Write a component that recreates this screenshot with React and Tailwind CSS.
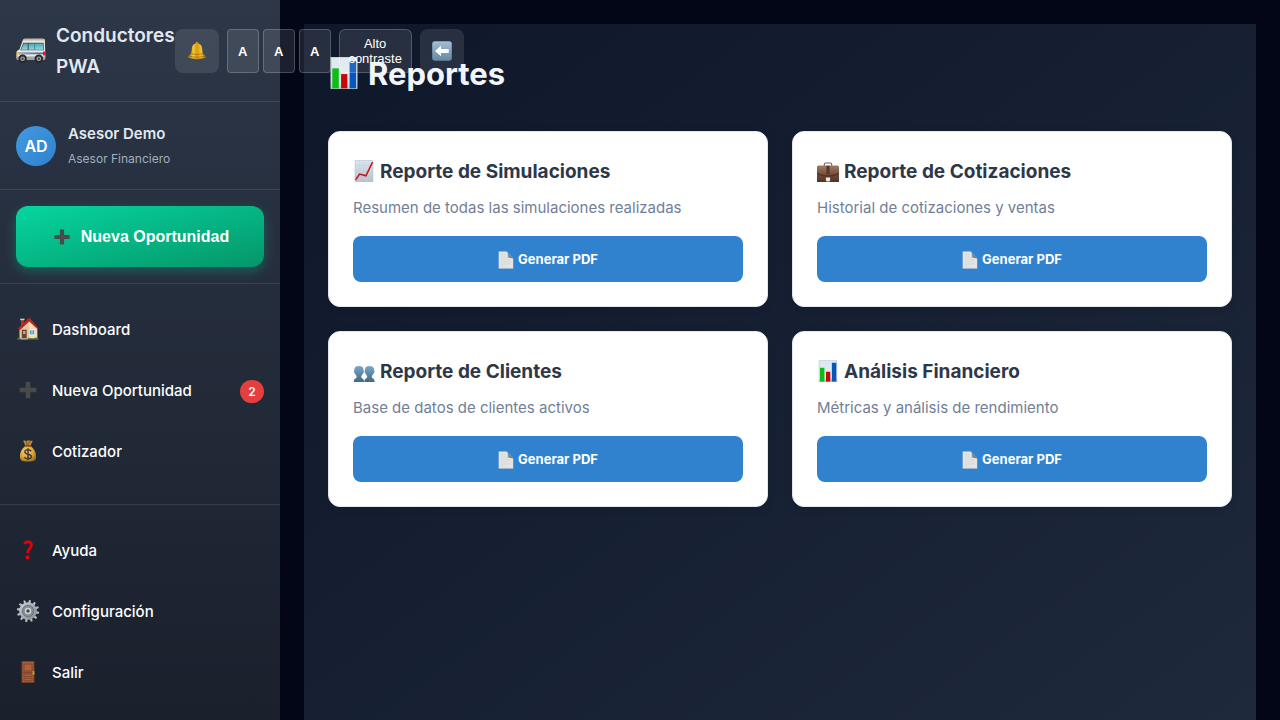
import React, { useId } from 'react';

function Van({ className }) {
  const id = useId();
  return (
    <svg viewBox="0 0 30 26" className={className} aria-hidden="true">
      <defs>
        <linearGradient id={id} x1="0" y1="0" x2="0" y2="1">
          <stop offset="0" stopColor="#4aa5b5" />
          <stop offset="1" stopColor="#8adbe2" />
        </linearGradient>
      </defs>
      <path d="M7 1.8C7.500 1 8.400.7 9.500.7H27c1.300 0 1.900.7 1.900 1.900L29.300 18c0 1.800-.6 3-2 3H2.500C1.200 21 .4 20.200.4 18.800l.2-4.500c0-1 .5-1.700 1.500-2.100l1.300-.7z" fill="#ebe8dc" />
      <path d="M7 1.800C7.500 1 8.400.7 9.500.7H27c1.300 0 1.900.7 1.900 1.900H6.600z" fill="#bcb9ad" />
      <path d="M7.300 4.800h20.300l.5 7.400H4.200z" fill="#3f4a50" />
      <path d="M7.800 5.400h3.800v6.300H5z" fill={`url(#${id})`} />
      <path d="M12.600 5.400h14.500l.4 6.300H12.600z" fill={`url(#${id})`} />
      <path d="M18.700 5.400v6.300" stroke="#287b88" strokeWidth=".7" />
      <path d="M1 14.500h28.200v2.100H3.500z" fill="#566cae" />
      <path d="M1 15.600l25 1.200h3" stroke="#dedff0" strokeWidth=".8" fill="none" />
      <path d="M.8 14.100h1.900l-.4 3.500H.6z" fill="#ffc31d" />
      <path d="M27.100 13.500h2.200v4h-2.200z" fill="#e31523" />
      <path d="M.4 18.600h29v2c0 .8-.5 1.300-1.300 1.300H1.800C.8 21.900.3 21.300.4 20.300z" fill="#a4a39c" />
      {[6.6, 22.8].map((x) => (
        <g key={x}>
          <circle cx={x} cy="20.700" r="4.200" fill="#252729" />
          <circle cx={x} cy="20.700" r="2.300" fill="#a9adaf" />
          <circle cx={x} cy="20.700" r="1.200" fill="#45484a" />
        </g>
      ))}
    </svg>
  );
}

function Bell({ className }) {
  const id = useId();
  return (
    <svg viewBox="0 0 20 20" className={className} aria-hidden="true">
      <defs>
        <linearGradient id={id}>
          <stop offset="0" stopColor="#8c5a04" />
          <stop offset=".3" stopColor="#f5cb34" />
          <stop offset=".5" stopColor="#d99a10" />
          <stop offset=".72" stopColor="#f2c52f" />
          <stop offset="1" stopColor="#7a4b04" />
        </linearGradient>
      </defs>
      <circle cx="10" cy="2.300" r="1.500" fill="#cf970f" />
      <ellipse cx="10" cy="17.300" rx="2.200" ry="1.700" fill="#8c5c09" />
      <path d="M10 2.400c3.500 0 5 2.100 5.200 5.400.2 4.100 1.100 6 3.700 7.300.9.500.7 1.300-.2 1.600-4.700 1.500-12.700 1.500-17.400 0-.9-.3-1-1.100-.2-1.600 2.600-1.300 3.500-3.200 3.700-7.300C5 4.500 6.500 2.400 10 2.400z" fill={`url(#${id})`} />
      <path d="M4.100 12.500c3.100 1.200 8.700 1.200 11.800 0M2.300 15.200c4.300 1.300 11.100 1.300 15.400 0" stroke="#9b6708" strokeWidth=".7" fill="none" />
    </svg>
  );
}

function Back({ className }) {
  const id = useId();
  return (
    <svg viewBox="0 0 20 20" className={className} aria-hidden="true">
      <defs>
        <linearGradient id={id} x1="0" y1="0" x2="0" y2="1">
          <stop offset="0" stopColor="#a3bfd4" />
          <stop offset="1" stopColor="#6488a4" />
        </linearGradient>
      </defs>
      <rect x=".2" y=".2" width="19.600" height="19.600" rx="2.800" fill={`url(#${id})`} />
      <path d="M3 10l6-5.300v3.200h7.700v4.200H9v3.200z" fill="#fff" />
    </svg>
  );
}

function Plus({ className }) {
  return (
    <svg viewBox="0 0 24 24" className={className} aria-hidden="true">
      <path d="M9.700 3.800h4.600v5.900h6v4.600h-6v5.900H9.700v-5.900h-6V9.700h6z" fill="#4a4a4a" />
    </svg>
  );
}

function House({ className }) {
  return (
    <svg viewBox="0 0 24 24" className={className} aria-hidden="true">
      <path d="M5 2.500h2.800V8H5z" fill="#a33b2b" />
      <path d="M4.200 1.700h4.300v1.500H4.200z" fill="#d9cfc0" />
      <path d="M3.500 10.500L13.200 2l8 8.700v11.100H3.500z" fill="#e3c79f" />
      <path d="M13.200 3.500l8 7.700v10.600h-8z" fill="#f2dcb8" />
      <path d="M1.800 11.800L12.300 1.200h1.900l7.900 9.800-.8 1-8-7.600-9.600 8.800z" fill="#b5281f" />
      <path d="M5.800 12.700h4.900v9.100H5.800z" fill="#72412d" />
      <path d="M7 14h2.500v3H7z" fill="#82b7cf" />
      <path d="M13 12.500h6v5.800h-6z" fill="#fff6df" />
      <path d="M13.700 13.200h4.600v4.300h-4.600z" fill="#5d9fca" />
      <path d="M16 13v4.700" stroke="#fff1d6" strokeWidth=".6" />
      <path d="M1 22.600c0-1.500 1-2.200 2.500-1.800v1.300h8.800v-1.300c2 .3 3.800.8 6.200.2 2.200-1 3.700-.4 4.500 1.600z" fill="#5f7d3a" />
      <path d="M4.500 21h7v1.500h-7z" fill="#aaa491" />
    </svg>
  );
}

function MoneyBag({ className }) {
  const id = useId();
  return (
    <svg viewBox="0 0 24 24" className={className} aria-hidden="true">
      <defs>
        <radialGradient id={id} cx=".4" cy=".35" r=".7">
          <stop offset="0" stopColor="#f8d371" />
          <stop offset=".6" stopColor="#d9a63c" />
          <stop offset="1" stopColor="#9d701f" />
        </radialGradient>
      </defs>
      <path d="M7.200 1.700c1.700-.8 2.500.5 4 .1 1.400-.6 2.100-.9 3.100 0 .8.500 1.600-.5 2.500.3l-2.900 5.200H9.700z" fill="#c28b36" />
      <path d="M10 2l1.500 4.300L14 2" stroke="#7f541b" fill="none" />
      <path d="M9.300 7h5.300c3.700 3 5.800 6.600 5.400 11.500-.2 3-2.100 4-8 4s-7.800-1-8-4C3.600 13.600 5.600 10 9.300 7z" fill={`url(#${id})`} />
      <rect x="8.500" y="5.900" width="7" height="1.900" rx=".8" fill="#805421" />
      <path d="M15.200 12.200c-.8-1-1.900-1.400-3.200-1.400-1.800 0-3.100.8-3.100 2.200 0 3.100 6.500 1.500 6.500 4.500 0 1.400-1.400 2.200-3.400 2.200-1.600 0-2.900-.5-3.700-1.500M12 9.200v12" fill="none" stroke="#413b31" strokeWidth="1.500" />
    </svg>
  );
}

function Question({ className }) {
  return (
    <svg viewBox="0 0 24 24" className={className} aria-hidden="true">
      <path d="M8.600 6.100c1-3.300 6.800-3.200 6.800.6 0 4-3.600 4.200-3.800 8.300" fill="none" stroke="#e60008" strokeWidth="2.700" />
      <circle cx="11.500" cy="19.200" r="2" fill="#e60008" />
    </svg>
  );
}

function Gear({ className }) {
  const id = useId();
  return (
    <svg viewBox="0 0 24 24" className={className} aria-hidden="true">
      <defs>
        <linearGradient id={id} x1="0" y1="0" x2="1" y2="1">
          <stop offset="0" stopColor="#cfd5d9" />
          <stop offset="1" stopColor="#818a91" />
        </linearGradient>
      </defs>
      {[0, 30, 60, 90, 120, 150, 180, 210, 240, 270, 300, 330].map((a) => (
        <path key={a} d="M10.700 4l.4-3.200h1.800l.4 3.200z" fill="#b5bdc2" transform={`rotate(${a + 10} 12 12)`} />
      ))}
      <circle cx="12" cy="12" r="8.800" fill={`url(#${id})`} />
      <circle cx="12" cy="12" r="5.800" fill="#858e94" stroke="#626b72" strokeWidth=".8" />
      <circle cx="12" cy="12" r="3.200" fill="#d3d8db" />
      <circle cx="12" cy="12" r="1.700" fill="#3b444c" />
    </svg>
  );
}

function Door({ className }) {
  return (
    <svg viewBox="0 0 24 24" className={className} aria-hidden="true">
      <path d="M5.500 1h13v22h-13z" fill="#754026" />
      <path d="M6.500 2h11v20h-11z" fill="#a65c37" />
      <path d="M8 4h8v7H8zM8 14h8v2.500H8zM8 18.500h8v2.300H8z" fill="#ad633c" stroke="#7b4327" strokeWidth=".8" />
      <path d="M7 12.600h10" stroke="#704023" strokeWidth=".8" />
      <path d="M16.500 11.200h2v3.500h-2z" fill="#c09b2b" />
    </svg>
  );
}

function BarChart({ className }) {
  const id = useId();
  return (
    <svg viewBox="0 0 24 24" className={className} aria-hidden="true">
      <defs>
        <linearGradient id={id} x1="0" y1="0" x2="0" y2="1">
          <stop offset="0" stopColor="#dde8f1" />
          <stop offset=".8" stopColor="#e6ebef" />
          <stop offset="1" stopColor="#b8c2ca" />
        </linearGradient>
      </defs>
      <path d="M2 0h20v24H2z" fill={`url(#${id})`} />
      <path d="M2.400.4h19.200v23.200H2.400z" stroke="#b8c5cf" strokeWidth=".5" fill="none" />
      <path d="M3.200 8.500h4.900v15H3.200z" fill="#0abd19" />
      <path d="M9.800 12.800h4.700v10.700H9.800z" fill="#c70908" />
      <path d="M16.200 3h4.900v20.500h-4.900z" fill="#0756bd" />
    </svg>
  );
}

function TrendChart({ className }) {
  const id = useId();
  return (
    <svg viewBox="0 0 24 24" className={className} aria-hidden="true">
      <defs>
        <linearGradient id={id} x1="0" y1="0" x2="0" y2="1">
          <stop offset="0" stopColor="#dbe7f0" />
          <stop offset="1" stopColor="#b8c3cc" />
        </linearGradient>
      </defs>
      <path d="M2 0h20v24H2z" fill={`url(#${id})`} />
      <path d="M2.400.4h19.200v23.200H2.400z" stroke="#b3c1cc" strokeWidth=".5" fill="none" />
      <path d="M7 0v24M12 0v24M17 0v24M2 6h20M2 12h20M2 18h20" stroke="#b9c8d3" strokeWidth=".25" fill="none" />
      <path d="M2.800 21.500l4.400-6.100 6.900 1.800L21.300 2.300" stroke="#c90f18" strokeWidth="1.600" fill="none" />
    </svg>
  );
}

function Briefcase({ className }) {
  const id = useId();
  return (
    <svg viewBox="0 0 24 24" className={className} aria-hidden="true">
      <defs>
        <linearGradient id={id} x1="0" y1="0" x2="0" y2="1">
          <stop offset="0" stopColor="#a47b60" />
          <stop offset=".5" stopColor="#76523e" />
          <stop offset="1" stopColor="#513126" />
        </linearGradient>
      </defs>
      <path d="M8 7V4.700c0-.9.5-1.400 1.400-1.400h5.200c.9 0 1.400.5 1.400 1.400V7" stroke="#70615a" strokeWidth="1.200" fill="none" />
      <path d="M1.500 6h21c.8 0 1.500.8 1.500 2v16H0V8c0-1.200.7-2 1.500-2z" fill={`url(#${id})`} />
      <path d="M0 13.500c6 4 18 4 24 0v2c-6 3.700-18 3.700-24 0z" fill="#543426" />
      <path d="M10.300 6.300h3.400v9.500h-3.400z" fill="#553829" />
      <path d="M9.700 19h4.600v3c0 1-.7 1.500-2.300 1.500S9.700 23 9.700 22z" fill="#ece8e0" />
    </svg>
  );
}

function People({ className }) {
  const id = useId();
  return (
    <svg viewBox="0 0 24 24" className={className} aria-hidden="true">
      <defs>
        <linearGradient id={id} x1="0" y1="0" x2="0" y2="1">
          <stop offset="0" stopColor="#79a7c8" />
          <stop offset="1" stopColor="#426883" />
        </linearGradient>
      </defs>
      {['translate(0 0)', 'translate(11.500 0)'].map((t) => (
        <path key={t} transform={t} d="M6.500 6.500c3.400 0 5.100 1.700 5.100 4.700 0 .6.400 1 .2 2.100-.2 1-.8 1.300-1.100 1.800-.5 1-.9 1.900-1.600 2.400v1.700c1.500 1.500 3 1.600 3 4.800H.9c0-3.200 1.500-3.300 3-4.800v-1.700c-.7-.5-1.100-1.400-1.600-2.400-.3-.5-.9-.8-1.100-1.800-.2-1.100.2-1.500.2-2.100 0-3 1.700-4.700 5.100-4.700z" fill={`url(#${id})`} />
      ))}
    </svg>
  );
}

function PageIcon({ className }) {
  const id = useId();
  return (
    <svg viewBox="0 0 16 18" className={className} aria-hidden="true">
      <defs>
        <linearGradient id={id} x1="1" y1=".4" x2="0" y2=".8">
          <stop offset="0" stopColor="#33383c" />
          <stop offset="1" stopColor="#b4b8bb" />
        </linearGradient>
      </defs>
      <path d="M.7.500h8.200l6.300 7v10H.7z" fill="#e4e5e5" />
      <path d="M8.900.5l6.300 7.300c-1.700-1-3.600-1.200-5.700-.6C9.900 5 9.900 2.700 8.900.5z" fill={`url(#${id})`} />
      <path d="M2.500 3h5M2.500 5h5M2.500 7h6M2.500 9h10M2.500 11h10M2.500 13h10M2.500 15h6" stroke="#cfd1d2" strokeWidth=".5" />
      <path d="M.7 17.300h14.500" stroke="#babcbd" strokeWidth=".5" />
    </svg>
  );
}

const mainLinks = [
  { label: 'Dashboard', Icon: House },
  { label: 'Nueva Oportunidad', Icon: Plus, badge: 2 },
  { label: 'Cotizador', Icon: MoneyBag },
];

const footerLinks = [
  { label: 'Ayuda', Icon: Question },
  { label: 'Configuración', Icon: Gear },
  { label: 'Salir', Icon: Door },
];

const reports = [
  { title: 'Reporte de Simulaciones', text: 'Resumen de todas las simulaciones realizadas', Icon: TrendChart },
  { title: 'Reporte de Cotizaciones', text: 'Historial de cotizaciones y ventas', Icon: Briefcase },
  { title: 'Reporte de Clientes', text: 'Base de datos de clientes activos', Icon: People },
  { title: 'Análisis Financiero', text: 'Métricas y análisis de rendimiento', Icon: BarChart },
];

function NavList({ items }) {
  return (
    <ul>
      {items.map(({ label, Icon, badge }) => (
        <li key={label}>
          <a href="#" className="flex h-[61px] items-center gap-3 px-4 text-[15px] font-medium text-white">
            <Icon className="mb-1 size-6 shrink-0" />
            <span className="flex-1">{label}</span>
            {badge && (
              <span className="flex h-[23px] w-6 items-center justify-center rounded-full bg-[#e53e3e] text-xs font-semibold">{badge}</span>
            )}
          </a>
        </li>
      ))}
    </ul>
  );
}

function Sidebar() {
  return (
    <aside className="relative z-10 flex w-[280px] shrink-0 flex-col bg-linear-to-b from-[#2d3748] to-[#1a202c]">
      <header className="flex items-center border-b border-white/10 pt-5 pb-[19px] pl-4">
        <div className="flex items-center gap-2.5">
          <Van className="w-[30px] shrink-0" />
          <h2 className="text-[19px] leading-[31px] font-semibold text-[#e2e8f0]">Conductores PWA</h2>
        </div>
        <div className="flex shrink-0 items-center gap-2 font-['Liberation_Sans',sans-serif] text-[13px] leading-[15px] text-white">
          <button aria-label="Notificaciones" className="flex size-11 items-center justify-center rounded-lg bg-white/10">
            <Bell className="size-5" />
          </button>
          <div className="flex gap-1 font-bold">
            <button aria-label="Texto pequeño" className="h-11 w-8 rounded border border-white/20 bg-white/10">A</button>
            <button aria-label="Texto normal" className="h-11 w-8 rounded border border-white/20 bg-white/10">A</button>
            <button aria-label="Texto grande" className="h-11 w-8 rounded border border-white/20 bg-white/10">A</button>
          </div>
          <button className="h-11 w-[73px] rounded-md border border-white/20 bg-white/10 px-2">Alto contraste</button>
          <button aria-label="Contraer menú" className="flex size-11 items-center justify-center rounded-lg bg-white/10">
            <Back className="size-5" />
          </button>
        </div>
      </header>

      <section className="flex items-center gap-3 border-b border-white/10 px-4 py-5">
        <div className="flex size-10 items-center justify-center rounded-full bg-linear-to-br from-[#4299e1] to-[#3182ce] font-semibold text-white">AD</div>
        <div className="flex flex-col gap-0.5">
          <p className="text-[15px] leading-6 font-semibold text-[#e2e8f0]">Asesor Demo</p>
          <p className="text-xs leading-[21px] text-[#a0aec0]">Asesor Financiero</p>
        </div>
      </section>

      <section className="border-b border-white/10 p-4">
        <button className="flex h-[61px] w-full items-center justify-center gap-2 rounded-xl bg-linear-to-br from-[#06d6a0] to-[#059669] font-['Liberation_Sans',sans-serif] font-bold text-white shadow-[0_4px_12px_rgba(6,214,160,0.3)]">
          <Plus className="size-[22px]" />
          Nueva Oportunidad
        </button>
      </section>

      <nav aria-label="Principal" className="flex-1 py-4">
        <NavList items={mainLinks} />
      </nav>
      <nav aria-label="Cuenta" className="border-t border-white/10 py-4">
        <NavList items={footerLinks} />
      </nav>
    </aside>
  );
}

function ReportCard({ title, text, Icon }) {
  return (
    <article className="rounded-xl border border-[#e2e8f0] bg-white p-6 shadow-[0_2px_8px_rgba(0,0,0,0.1)]">
      <h2 className="mb-2 flex items-center gap-[5px] text-[19px] leading-8 font-bold text-[#2d3748]">
        <Icon className="mb-0.5 size-[22px] shrink-0" />
        {title}
      </h2>
      <p className="mb-4 text-[15px] leading-6 text-[#718096]">{text}</p>
      <button className="flex h-[46px] w-full items-center justify-center gap-1 rounded-lg bg-[#3182ce] pt-0.5 text-[13px] font-bold text-white">
        <PageIcon className="w-4" />
        Generar PDF
      </button>
    </article>
  );
}

export default function App() {
  return (
    <div className="flex min-h-screen bg-[#020617] font-[Inter,sans-serif] antialiased">
      <Sidebar />
      <main className="mx-6 mt-6 flex-1 bg-linear-to-br from-[#0f172a] to-[#1e293b] p-6">
        <h1 className="mb-8 flex items-center gap-2 text-[31px] leading-[51px] font-bold text-[#f1f5f9]">
          <BarChart className="mb-0.5 size-8" />
          Reportes
        </h1>
        <div className="grid grid-cols-2 gap-6">
          {reports.map((report) => (
            <ReportCard key={report.title} {...report} />
          ))}
        </div>
      </main>
    </div>
  );
}
